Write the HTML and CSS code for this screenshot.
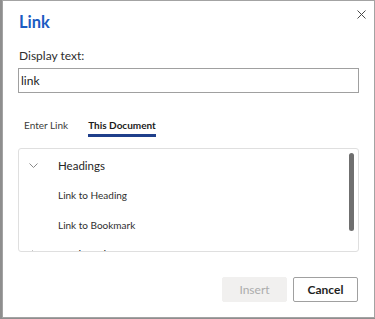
FILE: index.html
```html
<!DOCTYPE html>
<html>
<head>
<meta charset="utf-8">
<link rel="stylesheet" href="styles.css">
</head>
<body>
<div class="page">
  <div class="dialog">
    <div class="header">
      <h1 class="title">Link</h1>
      <button class="close" aria-label="Close">
        <svg width="9" height="9" viewBox="0 0 9 9"><path d="M0.5 0.5L8.5 8.5M8.5 0.5L0.5 8.5" stroke="#4a4a4a" stroke-width="1" fill="none"/></svg>
      </button>
    </div>
    <label class="field-label">Display text:</label>
    <div class="input">link</div>
    <div class="tabs">
      <span class="tab">Enter Link</span>
      <span class="tab active">This Document</span>
    </div>
    <div class="listbox">
      <div class="list">
        <div class="row group">
          <span class="chev"><svg width="9" height="5" viewBox="0 0 9 5"><path d="M0.5 0.5L4.5 4.5L8.5 0.5" stroke="#8a8a8a" stroke-width="1" fill="none"/></svg></span>
          <span>Headings</span>
        </div>
        <div class="row item">Link to Heading</div>
        <div class="row item">Link to Bookmark</div>
        <div class="row group">
          <span class="chev right"><svg width="5" height="9" viewBox="0 0 5 9"><path d="M0.5 0.5L4.5 4.5L0.5 8.5" stroke="#8a8a8a" stroke-width="1" fill="none"/></svg></span>
          <span>Bookmarks</span>
        </div>
      </div>
      <div class="scrolltrack"><div class="thumb"></div></div>
    </div>
    <div class="footer">
      <button class="btn disabled">Insert</button>
      <button class="btn">Cancel</button>
    </div>
  </div>
</div>
</body>
</html>
```
FILE: styles.css
```css
html, body {
  margin: 0;
  padding: 0;
}
body {
  width: 375px;
  height: 319px;
  overflow: hidden;
  background: #8e8e8e;
  font-family: Lato, "Open Sans", sans-serif;
  color: #262626;
}
.page {
  padding-left: 2px;
}
.dialog {
  box-sizing: border-box;
  width: 373px;
  height: 318px;
  background: #fff;
  border: 1px solid #a3a3a3;
  padding: 0 15px;
  display: flex;
  flex-direction: column;
}
.header {
  display: flex;
  justify-content: space-between;
  align-items: flex-start;
}
.title {
  margin: 0;
  padding-left: 1px;
  padding-top: 10px;
  font-size: 16.5px;
  line-height: 22px;
  font-weight: 700;
  color: #1b5cc2;
}
.close {
  border: 0;
  background: none;
  padding: 0;
  margin-top: 9px;
  margin-right: -7px;
  width: 9px;
  height: 9px;
  display: flex;
}
.field-label {
  display: block;
  margin-top: 15px;
  padding-left: 1px;
  font-size: 12px;
  line-height: 16px;
  color: #2e2e2e;
}
.input {
  box-sizing: border-box;
  margin-top: 4px;
  height: 25px;
  border: 1px solid #a0a0a0;
  padding: 0 2px;
  font-size: 12px;
  line-height: 23px;
  color: #222;
}
.tabs {
  display: flex;
  gap: 20px;
  padding-left: 6px;
  margin-top: 25px;
  font-size: 10px;
  line-height: 14px;
}
.tab {
  color: #3c3c3c;
  padding-bottom: 5px;
}
.tab.active {
  color: #1c1c1c;
  font-weight: 700;
  padding-bottom: 2px;
  border-bottom: 3px solid #1f3f8b;
}
.listbox {
  box-sizing: border-box;
  margin-top: 11px;
  height: 104px;
  border: 1px solid #dfdfdf;
  border-radius: 3px;
  display: flex;
  overflow: hidden;
}
.list {
  flex: 1;
  padding-top: 2px;
}
.row {
  height: 29.5px;
  display: flex;
  align-items: center;
  padding-left: 39px;
  white-space: nowrap;
}
.row.group {
  padding-left: 10px;
  font-size: 11.5px;
  color: #262626;
}
.chev {
  width: 29px;
  display: flex;
  align-items: center;
}
.chev.right {
  padding-left: 3px;
  width: 26px;
}
.row.item {
  font-size: 10px;
  color: #2e2e2e;
}
.scrolltrack {
  padding: 4px 4px 0 0;
}
.thumb {
  width: 5px;
  height: 78px;
  border-radius: 3px;
  background: #6f6f6f;
}
.footer {
  margin-top: auto;
  margin-bottom: 15px;
  margin-right: 1px;
  display: flex;
  justify-content: flex-end;
  gap: 6px;
}
.btn {
  box-sizing: border-box;
  width: 65px;
  height: 25px;
  border: 1px solid #a0a0a0;
  border-radius: 2px;
  background: #fff;
  font-family: inherit;
  font-size: 12px;
  font-weight: 700;
  color: #1f1f1f;
  padding: 0;
}
.btn.disabled {
  border-color: #f1f0ef;
  background: #f1f0ef;
  color: #acacac;
  font-weight: 400;
}
```
